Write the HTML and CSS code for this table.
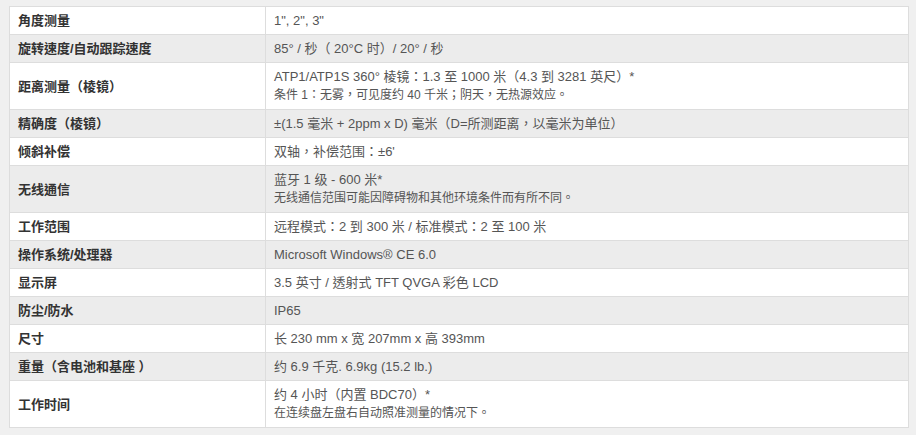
FILE: index.html
```html
<!DOCTYPE html>
<html lang="zh-TW">
<head>
<meta charset="utf-8">
<title>技术规格</title>
<link rel="stylesheet" href="styles.css">
</head>
<body>
<div class="wrap">
<table class="spec">
<tbody>
<tr><th>角度测量</th><td>1", 2", 3"</td></tr>
<tr><th>旋转速度/自动跟踪速度</th><td>85° / 秒（ 20°C 时）/ 20° / 秒</td></tr>
<tr><th>距离测量（棱镜）</th><td>ATP1/ATP1S 360° 棱镜：1.3 至 1000 米（4.3 到 3281 英尺）*<span class="note">条件 1：无雾，可见度约 40 千米；阴天，无热源效应。</span></td></tr>
<tr><th>精确度（棱镜）</th><td>±(1.5 毫米 + 2ppm x D) 毫米（D=所测距离，以毫米为单位）</td></tr>
<tr><th>倾斜补偿</th><td>双轴，补偿范围：±6'</td></tr>
<tr><th>无线通信</th><td>蓝牙 1 级 - 600 米*<span class="note">无线通信范围可能因障碍物和其他环境条件而有所不同。</span></td></tr>
<tr><th>工作范围</th><td>远程模式：2 到 300 米 / 标准模式：2 至 100 米</td></tr>
<tr><th>操作系统/处理器</th><td>Microsoft Windows® CE 6.0</td></tr>
<tr><th>显示屏</th><td>3.5 英寸 / 透射式 TFT QVGA 彩色 LCD</td></tr>
<tr><th>防尘/防水</th><td>IP65</td></tr>
<tr><th>尺寸</th><td>长 230 mm x 宽 207mm x 高 393mm</td></tr>
<tr><th>重量（含电池和基座 ）</th><td>约 6.9 千克. 6.9kg (15.2 lb.)</td></tr>
<tr><th>工作时间</th><td>约 4 小时（内置 BDC70）*<span class="note">在连续盘左盘右自动照准测量的情况下。</span></td></tr>
</tbody>
</table>
</div>
</body>
</html>
```
FILE: styles.css
```css
html, body {
  margin: 0;
  padding: 0;
  background: #f0f0f0;
}
body {
  font-family: "Liberation Sans", Arial, "Noto Sans CJK TC", "Noto Sans CJK SC", sans-serif;
  font-size: 13px;
  color: #555;
}
.wrap {
  padding: 6px 0 0 9px;
}
.spec {
  width: 900px;
  border-collapse: collapse;
  border: 1px solid #ddd;
}
.spec th,
.spec td {
  border: 1px solid #ddd;
  padding: 4px 8px;
  line-height: 19px;
  text-align: left;
  vertical-align: middle;
}
.spec th {
  width: 239px;
  font-weight: bold;
  color: #333;
}
.spec tr:nth-child(odd) { background: #fff; }
.spec tr:nth-child(even) { background: #ececec; }
.note {
  display: block;
  font-size: 12px;
  line-height: 19px;
}
```
